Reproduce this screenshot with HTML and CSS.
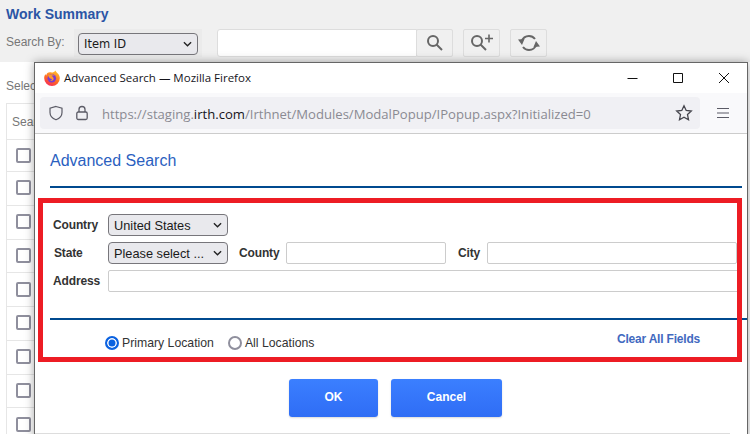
FILE: index.html
```html
<!DOCTYPE html>
<html lang="en">
<head>
<meta charset="utf-8">
<title>Work Summary</title>
<link rel="stylesheet" href="styles.css">
</head>
<body>
<div class="page">
  <header class="head">
    <h1 class="head-title">Work Summary</h1>
    <div class="search">
      <span class="search-label">Search By:</span>
      <div class="select-wrap">
        <div class="select select-main"><span>Item ID</span><svg class="chev" viewBox="0 0 10 6"><path d="M1 1l4 4 4-4"/></svg></div>
      </div>
      <div class="search-input"></div>
      <button class="tool tool-first"><svg viewBox="0 0 20 20" width="20" height="20"><circle cx="8" cy="8" r="5"/><path d="M11.500 11.500l5.500 5.500"/></svg></button>
      <button class="tool tool-add"><svg viewBox="0 0 28 20" width="28" height="20"><circle cx="9" cy="8" r="5"/><path d="M12.500 11.500l5.500 5.500"/><path class="thin" d="M21 1.500v8M17 5.500h8"/></svg></button>
      <button class="tool tool-ref"><svg viewBox="0 0 24 20" width="24" height="20"><path d="M4.500 8.500C6 4.500 9 3 12 3c2.500 0 4.500 1 6 3"/><path d="M19.500 11.500C18 15.500 15 17 12 17c-2.500 0-4.500-1-6-3"/><path class="fill" d="M1 6.500l6.500-.5-2.500 6zM23 13.500l-6.500.5 2.500-6z"/></svg></button>
    </div>
  </header>
  <div class="back">
    <div class="back-label">Selected</div>
    <div class="table">
      <div class="cell cell-head">Search</div>
      <div class="cell cell-first"><i class="check"></i></div>
      <div class="cell"><i class="check"></i></div>
      <div class="cell"><i class="check"></i></div>
      <div class="cell"><i class="check"></i></div>
      <div class="cell"><i class="check"></i></div>
      <div class="cell"><i class="check"></i></div>
      <div class="cell"><i class="check"></i></div>
      <div class="cell"><i class="check"></i></div>
      <div class="cell"><i class="check"></i></div>
    </div>
  </div>

  <section class="win">
    <div class="win-bar">
      <svg class="fx" viewBox="0 0 16 16" width="16" height="16">
        <defs>
          <linearGradient id="fxg" x1="0.7" y1="0" x2="0.2" y2="1"><stop offset="0" stop-color="#ffbd2e"/><stop offset="0.55" stop-color="#ff6a22"/><stop offset="1" stop-color="#f5245f"/></linearGradient>
        </defs>
        <path fill="url(#fxg)" d="M11.500 0.500c.5 1.500 1.500 2 2.500 3.300 1.300 1.500 1.800 3 1.800 4.400A7.800 7.800 0 0 1 .2 8.200C.2 6.500.6 5.200 1.500 4c0 .8.300 1.200.7 1.500C2.600 3.500 4 2.300 5.800 2.300 6.500 2.200 9.500 3.500 11.500.5z"/>
        <circle cx="7.800" cy="8.300" r="4.300" fill="#7a3bd0"/>
        <path fill="#ff9a2a" d="M4 5.500c2-1.700 5.500-1.600 7 .5-1.500-.6-2.500-.5-3.500 0 1.500.5 2.500 2 2 3.500-.5 1.300-2.500 2-4 1 1.500.2 2.500-.5 2.500-1.500-1.500 0-3-1-4-3.500z"/>
      </svg>
      <span class="win-title">Advanced Search — Mozilla Firefox</span>
      <div class="win-controls">
        <svg viewBox="0 0 12 12" width="12" height="12" class="wc wc-min"><path d="M1.500 6.500h10"/></svg>
        <svg viewBox="0 0 12 12" width="12" height="12" class="wc wc-max"><path d="M1.500 1.500h9v9h-9z"/></svg>
        <svg viewBox="0 0 12 12" width="12" height="12" class="wc wc-close"><path d="M1 1l10 10M11 1L1 11"/></svg>
      </div>
    </div>
    <div class="win-tools">
      <div class="url">
        <svg class="ic-shield" viewBox="0 0 16 16" width="16" height="16"><path d="M8 1.500l6 1.800v4.200c0 3.500-2.500 6-6 7.300-3.500-1.300-6-3.800-6-7.300V3.300z"/></svg>
        <svg class="ic-lock" viewBox="0 0 14 16" width="14" height="16"><path d="M4 7V4.500a3 3 0 0 1 6 0V7"/><rect x="1.800" y="7" width="10.400" height="7.500" rx="1.500"/></svg>
        <span class="url-text">https://staging.<b>irth.com</b>/Irthnet/Modules/ModalPopup/IPopup.aspx?Initialized=0</span>
        <svg class="ic-star" viewBox="0 0 18 18" width="18" height="18"><path d="M9 1.800l2.200 4.700 5.100.6-3.800 3.500 1 5.100L9 13.200l-4.500 2.500 1-5.100L1.700 7.100l5.100-.6z"/></svg>
      </div>
      <svg class="ic-menu" viewBox="0 0 12 12" width="12" height="12"><path d="M0 1.500h12M0 6h12M0 10.500h12"/></svg>
    </div>
    <div class="win-body">
      <h2 class="adv-title">Advanced Search</h2>
      <div class="rule rule-top"></div>
      <div class="form">
        <div class="row">
          <label class="lab lab-a">Country</label>
          <div class="select select-f"><span>United States</span><svg class="chev" viewBox="0 0 10 6"><path d="M1 1l4 4 4-4"/></svg></div>
        </div>
        <div class="row">
          <label class="lab lab-a lab-state">State</label>
          <div class="select select-f"><span>Please select ...</span><svg class="chev" viewBox="0 0 10 6"><path d="M1 1l4 4 4-4"/></svg></div>
          <label class="lab lab-county">County</label>
          <div class="field field-county"></div>
          <label class="lab lab-city">City</label>
          <div class="field field-city"></div>
        </div>
        <div class="row">
          <label class="lab lab-a">Address</label>
          <div class="field field-addr"></div>
        </div>
      </div>
      <div class="rule rule-bottom"></div>
      <div class="options">
        <i class="radio radio-on"></i><span class="radio-text">Primary Location</span>
        <i class="radio radio-off"></i><span class="radio-text">All Locations</span>
        <a class="clear">Clear All Fields</a>
      </div>
      <div class="actions">
        <button class="btn btn-ok">OK</button>
        <button class="btn btn-cancel">Cancel</button>
      </div>
      <div class="foot-line"></div>
    </div>
    <div class="annot"></div>
  </section>
</div>
</body>
</html>
```

FILE: styles.css
```css
* { box-sizing: border-box; }
html, body { margin: 0; padding: 0; height: 100%; overflow: hidden; background: #fff; }
body { font-family: "Liberation Sans", Arial, sans-serif; font-size: 12px; color: #333; }
.page { position: relative; width: 750px; height: 434px; overflow: hidden; }

.head { height: 62px; background: #f0f0f0; padding: 6px 0 0 6px; }
.head-title { margin: 0; font-size: 14px; line-height: 16px; font-weight: 700; color: #2b55a5; }
.search { display: flex; align-items: flex-start; margin-top: 7px; }
.search-label { width: 68px; line-height: 28px; margin-top: -1px; color: #777; }
.select-wrap { width: 128px; height: 28px; background: #ebebeb; padding: 4px; }
.select { display: flex; align-items: center; justify-content: space-between; height: 22px; border: 1px solid #77767b; border-radius: 4px; background: #e9e9ed; color: #1a1a1a; font-family: "DejaVu Sans", sans-serif; font-size: 11.5px; padding: 0 5px 0 5px; }
.select-main { width: 120px; }
.select-f { width: 120px; font-family: "Liberation Sans", sans-serif; font-size: 12.75px; }
.chev { width: 9px; height: 6px; fill: none; stroke: #222; stroke-width: 1.5; flex: none; }
.search-input { width: 200px; height: 28px; margin-left: 15px; background: #fff; border: 1px solid #ddd; border-radius: 3px 0 0 3px; }
.tool { display: flex; align-items: center; justify-content: center; height: 28px; width: 37px; padding: 0; background: #f0f0f0; border: 1px solid #ddd; border-radius: 2px; }
.tool svg { fill: none; stroke: #666; stroke-width: 2; }
.tool svg .thin { stroke-width: 1.6; }
.tool svg .fill { fill: #666; stroke: none; }
.tool-first { margin-left: -1px; }
.tool-add { margin-left: 10px; }
.tool-ref { margin-left: 10px; }

.back { padding: 0 0 0 6px; }
.back-label { height: 41px; line-height: 48px; color: #777; }
.table { border: 1px solid #e6e6e6; border-bottom: 0; width: 700px; }
.cell { display: flex; align-items: center; height: 33.75px; padding-left: 9px; border-bottom: 1px solid #e6e6e6; }
.cell-head { height: 36px; padding-left: 5px; color: #777; }
.cell-first { height: 32px; }
.check { display: block; width: 15px; height: 15px; margin-top: -1px; border: 2px solid #8f8f9d; border-radius: 2px; background: #fff; }

.win { position: absolute; left: 34px; top: 62px; width: 714px; height: 380px; background: #fff; border: 1px solid #666; box-shadow: 0 0 9px rgba(0,0,0,.35); }
.win-bar { display: flex; align-items: center; height: 30px; padding: 0 0 1px 9px; background: #fff; }
.fx { flex: none; }
.win-title { margin-left: 4px; font-family: "Open Sans", sans-serif; font-size: 11.5px; color: #15141a; }
.win-controls { display: flex; margin-left: auto; padding-right: 17px; gap: 34px; }
.wc { fill: none; stroke: #111; stroke-width: 1; }
.win-tools { display: flex; align-items: center; height: 41px; padding-left: 5px; background: #f9f9fb; border-bottom: 1px solid #ccc; }
.url { display: flex; align-items: center; width: 660px; height: 32px; background: #f0f0f4; border-radius: 4px; padding-left: 8px; }
.ic-shield { fill: none; stroke: #5b5b66; stroke-width: 1.2; flex: none; }
.ic-lock { fill: none; stroke: #5b5b66; stroke-width: 1.3; flex: none; margin-left: 11px; }
.url-text { margin: 2px 0 0 13px; font-family: "Open Sans", sans-serif; font-size: 13.1px; color: #8a8a92; white-space: nowrap; }
.url-text b { font-weight: 400; color: #15141a; }
.ic-star { margin-left: auto; margin-right: 7px; fill: none; stroke: #45454d; stroke-width: 1.3; flex: none; }
.ic-menu { margin-left: 17px; fill: none; stroke: #5b5b66; stroke-width: 1.2; flex: none; }

.win-body { padding: 17px 0 0 15px; }
.adv-title { margin: 0; font-size: 16px; line-height: 20px; font-weight: 400; color: #2b5fbf; }
.rule { height: 2px; background: #004a8f; }
.rule-top { margin-top: 15px; width: 692px; }
.rule-bottom { margin-top: 26px; }
.form { margin-top: 26px; display: flex; flex-direction: column; gap: 6px; }
.row { display: flex; align-items: center; height: 22px; }
.lab { margin-top: -1px; font-weight: 700; font-size: 12px; letter-spacing: -.15px; color: #333; }
.lab-a { width: 58px; padding-left: 3px; flex: none; }
.lab-state { padding-left: 4px; }
.lab-county { margin-left: 11px; width: 47px; }
.lab-city { margin-left: 12px; width: 29px; }
.field { height: 22px; background: #fff; border: 1px solid #ccc; border-radius: 2px; }
.field-county { width: 160px; }
.field-city { width: 250px; }
.field-addr { width: 632px; }
.options { display: flex; align-items: center; height: 44px; padding-left: 55px; position: relative; }
.radio { display: block; width: 14px; height: 14px; border-radius: 50%; flex: none; margin-top: 1px; }
.radio-on { background: #0b62e0; border: 2px solid #0b62e0; box-shadow: inset 0 0 0 1.5px #fff; }
.radio-off { margin-left: 14px; border: 2px solid #8f8f9d; background: #fff; }
.radio-text { margin-left: 3px; margin-top: 1px; font-size: 12.25px; color: #333; }
.clear { margin-left: auto; margin-right: 47px; margin-top: -7px; font-size: 12px; letter-spacing: -.2px; font-weight: 700; color: #4169c0; }
.actions { display: flex; justify-content: flex-start; gap: 13px; margin-top: 15px; padding-left: 239px; }
.btn { height: 38px; padding: 0 0 2px; border: 0; border-radius: 3px; background: linear-gradient(#3b7fff, #2f6df5); color: #fff; font-family: "Liberation Sans", sans-serif; font-size: 12px; font-weight: 700; box-shadow: 0 1px 2px rgba(0,0,0,.15); }
.btn-ok { width: 89px; }
.btn-cancel { width: 111px; }
.foot-line { width: 695px; height: 1px; margin: 16px 0 0 -15px; background: #ddd; }
.annot { position: absolute; left: 3px; top: 135px; width: 704px; height: 164px; border: 5px solid #ed1c24; }
```
